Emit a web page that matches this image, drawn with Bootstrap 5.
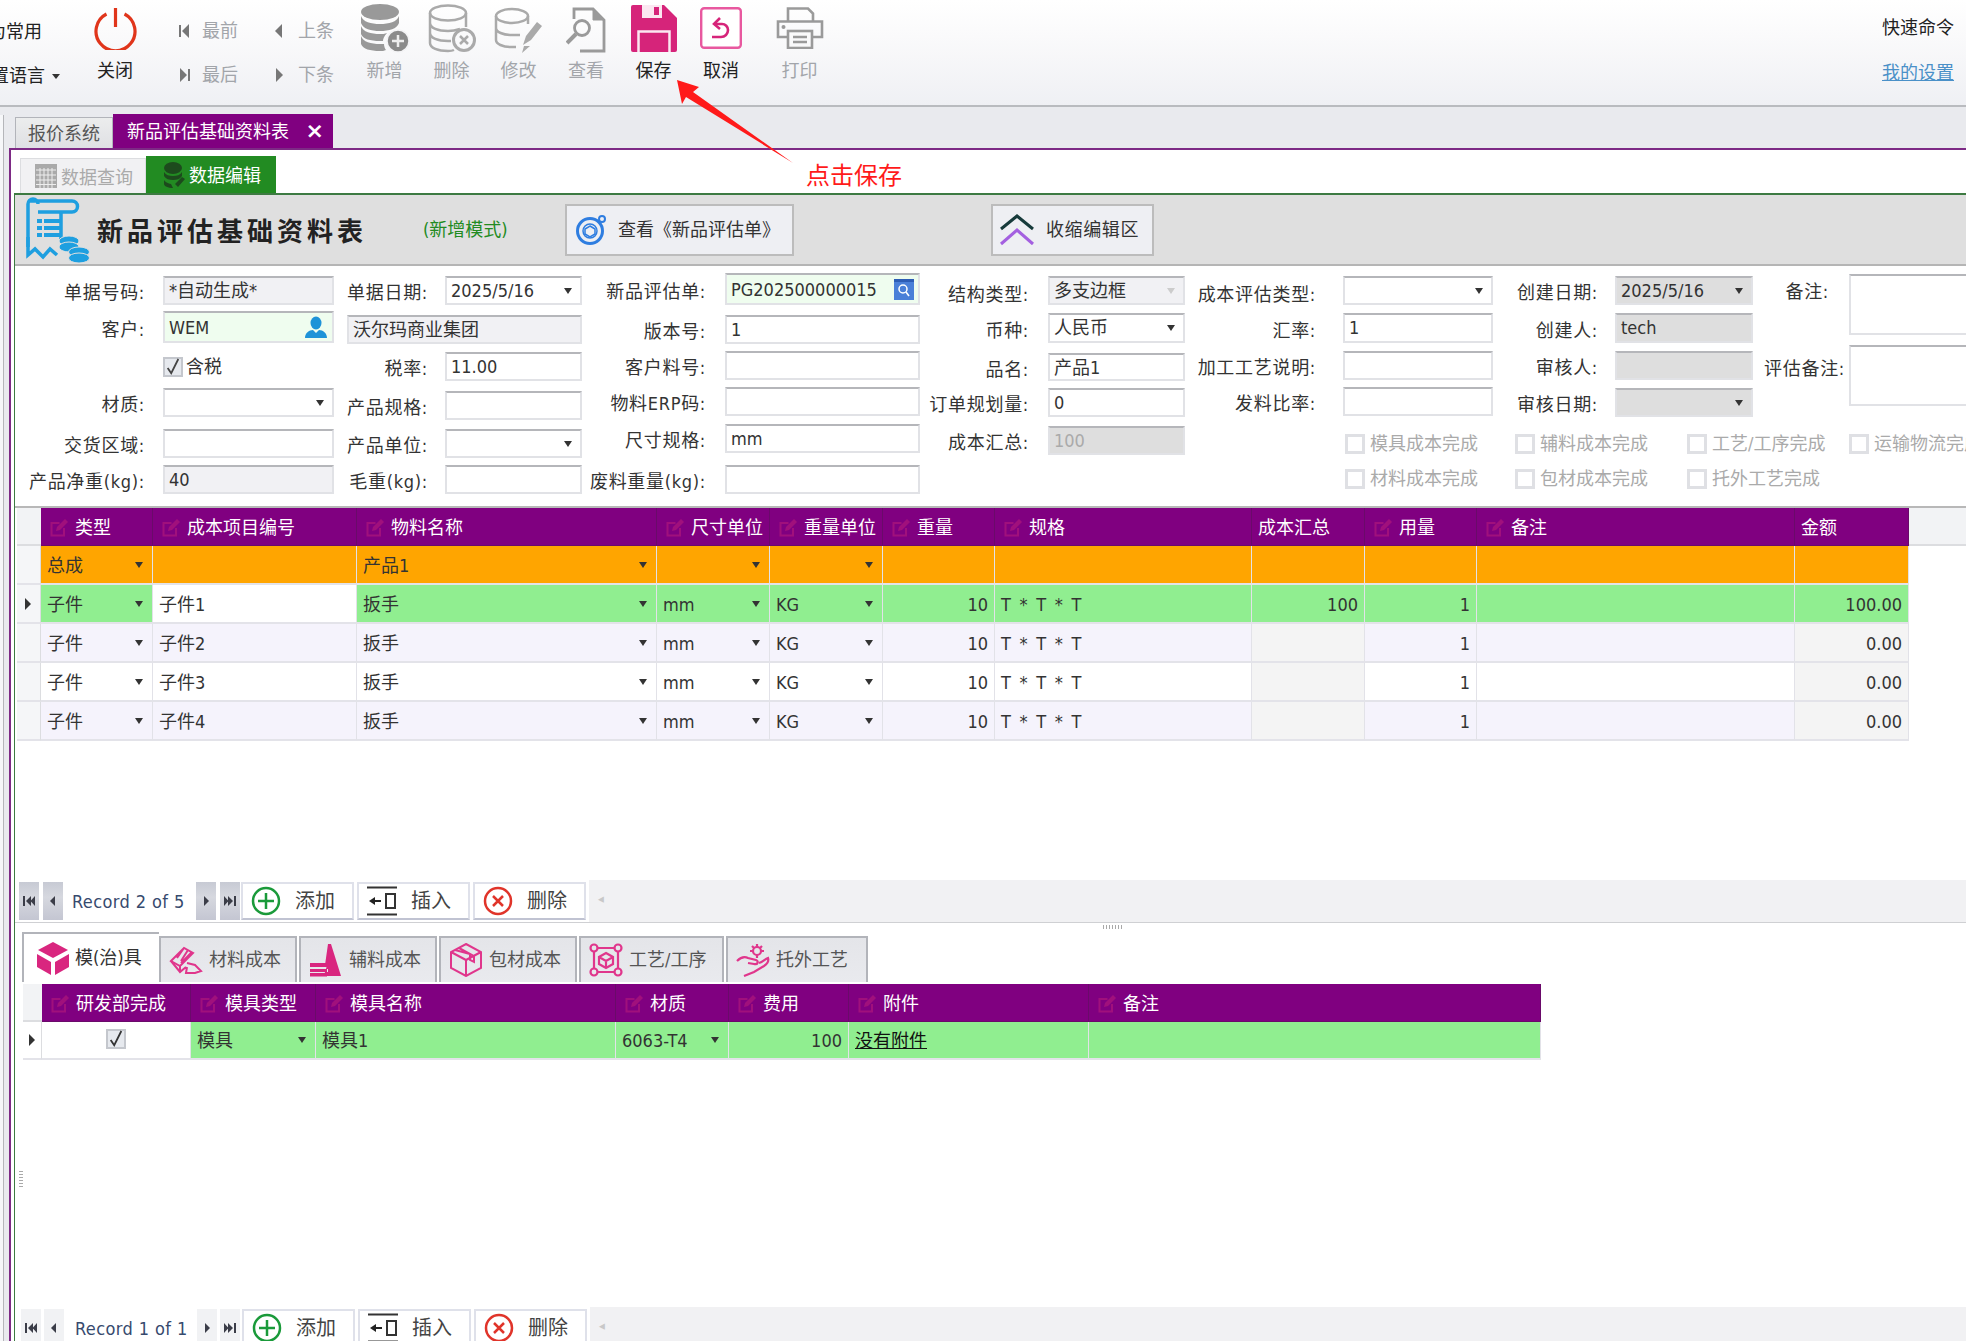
<!DOCTYPE html>
<html lang="zh-CN">
<head>
<meta charset="utf-8">
<title>新品评估基础资料表</title>
<link href="https://cdn.jsdelivr.net/npm/bootstrap@5.3.0/dist/css/bootstrap.min.css" rel="stylesheet">
<style>
html,body{width:1966px;height:1341px;overflow:hidden;margin:0}
body{font-family:"DejaVu Sans Condensed","DejaVu Sans","Noto Sans CJK SC",sans-serif;font-size:18px;line-height:1.2;color:#333;background:#fff;position:relative}
.sprites{display:none}
/* toolbar */
.tbar{height:107px;background:linear-gradient(#fff 0,#fafafb 35%,#eff0f4 100%);border-bottom:2px solid #b9bbbf;overflow:hidden}
.cutbox{width:60px;overflow:hidden;flex:none;padding-top:10px}
.cutln{height:44px;white-space:nowrap;justify-content:flex-end;color:#222}
.cutln.one{padding-right:18px}
.crt{width:0;height:0;border-left:4px solid transparent;border-right:4px solid transparent;border-top:5px solid #333;margin-left:7px}
.bigbtn{flex:none;display:flex;flex-direction:column;align-items:center;height:107px;position:relative;color:#a2a5aa}
.bigbtn.on{color:#222}
.icbox{height:60px;display:flex;align-items:flex-start;justify-content:center}
.w66{width:66px}.w67{width:67px}.w68{width:68px}.w89{width:89px}
.ml22{margin-left:22px}.ml11{margin-left:11px}
.pt7{padding-top:7px}.pt4{padding-top:4px}.pt5{padding-top:5px}
.navgrp{width:161px;margin-left:31px;padding-top:20px;flex:none;color:#a2a5aa}
.navln{height:44px;display:flex;align-items:flex-start}
.navitm{width:95px;display:flex;align-items:center;color:#a2a5aa}
.navitm svg{width:11px;height:14px;margin-right:12px;flex:none}
.navitm.up{width:66px}
.navitm.up svg{margin-right:13px}
.qcmd{margin-left:auto;padding:17px 12px 0 0;text-align:right;color:#222}
.qlink{display:block;margin-top:23px;color:#4a90c8;text-decoration:underline}
/* stage */
.stage{height:1234px;background:#e9eaee}
.lstrip{width:9px;flex:none}
.lpane{width:4px;height:100%;margin-top:8px;background:#f6f7f9;border-right:1px solid #b5b6ba}
.rpane{flex:1;min-width:0}
.ttabs{height:41px;padding:7px 0 0 6px;align-items:flex-end}
.ttab{height:31px;width:98px;background:linear-gradient(#eceded,#dfe0e4);border:1px solid #b2b4ba;border-bottom:0;color:#555;text-align:center;line-height:32px}
.ttab.act{height:34px;width:220px;background:#800080;border:0;color:#fff;text-align:left;padding-left:14px;line-height:35px;justify-content:space-between;padding-right:9px;font-size:18px}
.closex{font-weight:700;font-size:22px;line-height:33px;font-family:"DejaVu Sans",sans-serif}
.pframe{border-top:2px solid #7d2a85;border-left:2px solid #7d2a85;background:#fff;height:1193px;padding-left:3px}
.stabs{height:43px;padding-left:6px;align-items:flex-end}
.stab{height:35px;width:126px;background:#f1f1f3;border:1px solid #dcdde0;border-bottom:0;color:#aaa;gap:4px;padding-left:14px}
.stab span{padding-top:3px}
.stab.act{height:37px;width:130px;background:#228b22;border:0;color:#fff;padding-left:17px}
.gframe{border-top:2px solid #3d7a42;border-left:1px solid #3d7a42;height:1148px}
.headb{height:71px;background:#dfdfdf;border-bottom:2px solid #b5b5b5;padding-left:8px;overflow:hidden}
.ttl{font-weight:700;font-size:26px;letter-spacing:4px;color:#222;margin-left:7px;width:326px;font-family:"Noto Sans CJK SC",sans-serif}
.mode{color:#228b22;width:142px}
.hbtn{height:52px;background:#eeeff3;border:2px solid #bcbcbc;border-radius:0;color:#333;padding:0 8px;font-size:18px;gap:11px;display:flex;align-items:center;white-space:nowrap;--bs-btn-hover-bg:#eeeff3}
.w229{width:229px}.w163{width:163px;margin-left:197px;padding:0 6px;letter-spacing:.6px}
/* form */
.frm{height:240px;overflow:hidden}
.fcol{flex:none}
.fcol1{width:319px}.fcol2{width:248px}.fcol3{width:338px}.fcol4{width:265px}.fcol5{width:308px}.fcol6{width:260px}.fcol7{width:230px}
.fld{height:29px;display:flex;align-items:center}
.h30{height:30px}.h32{height:32px}.h28{height:28px}.h61{height:61px;align-items:flex-start}
.gp6{margin-top:6px}.gp7{margin-top:7px}.gp8{margin-top:8px}.gp9{margin-top:9px}.gp10{margin-top:10px}.gp12{margin-top:12px}
.lb{flex:none;text-align:right;white-space:nowrap;padding-top:5px;color:#333;letter-spacing:.7px}
.lb1{width:148px;padding-right:18px}.lb2{width:111px;padding-right:17px}.lb3{width:143px;padding-right:19px}.lb4{width:128px;padding-right:19px}.lb5{width:158px;padding-right:27px}.lb6{width:122px;padding-right:17px}.lb7{width:96px;padding-right:4px}
.lb.lbd{padding-top:9px}
.lb.lbn{padding:7px 20px 0 0}
.lb.lbm{padding-top:13px}
.fld .form-control,.fld .form-select{height:100%;border-radius:0;border:2px solid #e1e2e6;border-top-color:#b5b6ba;padding:0 4px;font-size:18px;line-height:25px;color:#333;min-height:0;box-shadow:none;white-space:nowrap;overflow:hidden;font-family:inherit}
.fld .form-select{background-image:url("data:image/svg+xml,%3Csvg xmlns='http://www.w3.org/2000/svg' viewBox='0 0 8 6'%3E%3Cpath d='M0 0h8L4 6z' fill='%23333'/%3E%3C/svg%3E");background-size:8px 6px;background-position:right 8px center}
.w171{width:171px;flex:none}.w137{width:137px;flex:none}.w195{width:195px;flex:none}.w150{width:150px;flex:none}.w138{width:138px;flex:none}.w140{width:150px;flex:none}
.w235{width:235px;flex:none;margin-left:13px}
.bgro{background-color:#f1f1f4 !important}.bggn{background-color:#effdef !important}.bgd{background-color:#dedede !important}.dim{color:#aaa !important}
.faint.form-select{background-image:url("data:image/svg+xml,%3Csvg xmlns='http://www.w3.org/2000/svg' viewBox='0 0 8 6'%3E%3Cpath d='M0 0h8L4 6z' fill='%23ccc'/%3E%3C/svg%3E") !important}
.tight{display:flex !important;justify-content:space-between;align-items:center}
.ck{width:20px;height:20px;flex:none;background:#e6e9ee;border:2px solid #c4c7cd;border-radius:0;display:inline-flex;align-items:center;justify-content:center}
.ck.off{background:#fff;border:3px solid #dfe0e4}
.chk{height:29px;padding-left:0;gap:3px;color:#333}
.chkpad{margin-left:148px}
.cgrp{flex:none;width:798px}
.cgrid{display:grid;grid-template-columns:170px 172px 162px auto;row-gap:15px;padding:17px 0 0 160px}
.cit{display:flex;align-items:center;gap:5px;color:#aaa;white-space:nowrap;height:20px}
/* grids */
.rule{height:2px;background:#b8b8b8}
.g1wrap{height:372px;padding-left:2px;overflow:hidden}
.g2wrap{height:323px;margin-top:2px;padding-left:8px;overflow:hidden}
.dg{table-layout:fixed;margin:0;border-collapse:separate;border-spacing:0;font-size:18px;line-height:1.2}
.dg.t1{width:1950px}.dg.t2{width:1518px}
.dg>*>tr>*{padding:2px 6px 0;height:39px;border:0;border-right:1px solid #e2e2e8;border-bottom:2px solid #e3e3e9;white-space:nowrap;overflow:hidden;vertical-align:middle;color:#333;font-weight:400}
.dg>thead>tr>*{height:38px;--bs-table-bg:#800080;color:#fff;border-right:1px solid #6a0a6a;border-bottom:1px solid #6a0a6a}
.dg.t2>tbody>tr>*{height:38px}
.dg>thead>tr>th.ind,.dg>thead>tr>th.fil{--bs-table-bg:#f2f3f5;border-right:0;border-bottom:2px solid #dcdde0}
.dg>tbody>tr>td.ind{--bs-table-bg:#f5f6f8;padding:0 0 0 8px;border-right:1px solid #dcdde0}
.dg.t2>tbody>tr>td.ind{padding-left:6px}
.dg>tbody>tr>td.indw{--bs-table-bg:#fff}
.dg>tbody>tr>td.fil{--bs-table-bg:#fff;border:0}
.thi{display:flex;align-items:center;gap:6px}
.thi svg{width:20px;height:20px;flex:none;margin-left:2px;color:#a0107c}
.rorg>td{--bs-table-bg:#ffa500}
.rgrn>td{--bs-table-bg:#90ee90}
.ralt>td{--bs-table-bg:#f5f3fc}
.rwht>td{--bs-table-bg:#fff}
.dg>tbody>tr>td.cw{--bs-table-bg:#fff}
.dg>tbody>tr>td.cg{--bs-table-bg:#f4f4f4}
.tts{word-spacing:3.5px}
.dd{background-image:url("data:image/svg+xml,%3Csvg xmlns='http://www.w3.org/2000/svg' viewBox='0 0 8 6'%3E%3Cpath d='M0 0h8L4 6z' fill='%23333'/%3E%3C/svg%3E");background-repeat:no-repeat;background-size:8px 6px;background-position:right 9px center}
.ar{width:0;height:0;border-top:6px solid transparent;border-bottom:6px solid transparent;border-left:6px solid #333;display:block}
.c-a{width:24px}.c-b{width:112px}.c-c{width:204px}.c-d{width:300px}.c-e{width:113px}.c-f{width:112px}.c-g{width:257px}.c-h{width:318px}.c-i{width:114px}.c-j{width:58px}
.d-a{width:19px}.d-b{width:149px}.d-c{width:125px}.d-d{width:113px}.d-e{width:120px}.d-f{width:240px}.d-g{width:452px}
/* record nav */
.rnav{height:42px;padding-top:2px;margin-left:4px;overflow:hidden}
.rnav.pad2{margin-left:6px;height:34px}
.mv{width:20px;height:38px;flex:none;background:linear-gradient(#c7cad4,#d6d8df 40%,#c4c6d2);display:flex;align-items:center;justify-content:center;margin-right:4px}
.mv.lastmv{margin-right:1px}
.mv.pale{background:#f1f2f4;margin-right:3px}
.mv.pale.lastmv{margin-right:2px}
.mv svg{width:12px;height:10px}
.rec{width:129px;flex:none;padding-left:5px;color:#364a6e;white-space:nowrap;line-height:40px;letter-spacing:.4px}
.pad2 .rec{width:130px;padding-left:8px}
.acbtn{flex:none;width:113px;height:38px;background:#fff;border:2px solid #dfe1ea;border-bottom-color:#c0c3d2;border-radius:0;margin-right:3px;padding:0 0 0 8px;display:flex;align-items:center;gap:14px;color:#444;font-size:20px;--bs-btn-hover-bg:#fff}
.acbtn svg{width:30px;height:30px;flex:none}
.trk{flex:1;height:42px;margin-top:-2px;background:#f1f1f3;color:#c8c8c8;padding:11px 0 0 9px;font-size:13px}
.split{height:10px;border-top:1px solid #cfd0d3;position:relative}
.grip{display:block;width:20px;height:4px;margin:2px 0 0 1088px;background:repeating-linear-gradient(90deg,#a9a9a9 0 1px,#fff 1px 3px)}
.mtabs{height:50px;padding-left:7px;align-items:flex-end;border-bottom:0}
.mtab{height:46px;width:138px;background:linear-gradient(#e4e5e9,#e9eaee);border:2px solid #b2b4ba;border-right-color:#b2b4ba;border-bottom:0;margin-right:2px;color:#555;gap:6px;padding-left:8px;white-space:nowrap}
.mtab svg{width:34px;height:34px;flex:none}
.mtab.act{height:50px;width:137px;background:#fff;border-right:0;color:#333;margin-right:0;padding-left:12px;gap:5px}
.mtab.wd{width:145px}
.mtab.wf{width:142px}
.rgrip{position:absolute;left:19px;top:1171px;width:4px;height:16px;background:repeating-linear-gradient(#a9a9a9 0 1px,#fff 1px 3px)}
.rarrow{position:absolute;left:0;top:0;width:1966px;height:200px;pointer-events:none}
.note{position:absolute;left:806px;top:158px;color:#ff1a1a;font-size:24px;font-family:"Noto Sans CJK SC",sans-serif;line-height:1.3}
.ulink{color:#111;text-decoration:underline}
</style>
</head>
<body>
<svg class="sprites" xmlns="http://www.w3.org/2000/svg">
  <symbol id="ed" viewBox="0 0 20 20"><path d="M15 10v7.500H2.500V5h8" fill="none" stroke="currentColor" stroke-width="2"/><path d="M7 13l1-4 8-8 3 3-8 8z" fill="currentColor"/></symbol>
  <symbol id="first" viewBox="0 0 12 10"><path d="M0 0h2v10H0zM8 0v10L3 5zM12 0v10L7.500 5z" fill="#3b3d48"/></symbol>
  <symbol id="prev" viewBox="0 0 12 10"><path d="M8 0v10L3 5z" fill="#3b3d48"/></symbol>
  <symbol id="next" viewBox="0 0 12 10"><path d="M4 0v10l5-5z" fill="#3b3d48"/></symbol>
  <symbol id="last" viewBox="0 0 12 10"><path d="M12 0h-2v10h2zM4 0v10l5-5zM0 0v10l4.500-5z" fill="#3b3d48"/></symbol>
  <symbol id="plus" viewBox="0 0 30 30"><circle cx="15" cy="15" r="13" fill="none" stroke="#1a9a3a" stroke-width="2.500"/><path d="M15 7v16M7 15h16" stroke="#1a9a3a" stroke-width="2.500"/></symbol>
  <symbol id="ins" viewBox="0 0 30 30"><path d="M0 1.500h30M0 28.500h30" stroke="#333" stroke-width="2"/><path d="M2 15l6-4v3h6v2H8v3z" fill="#222"/><rect x="19" y="8" width="9" height="14" fill="none" stroke="#333" stroke-width="2"/></symbol>
  <symbol id="del" viewBox="0 0 30 30"><circle cx="15" cy="15" r="13" fill="none" stroke="#e0342a" stroke-width="2.500"/><path d="M10 10l10 10M20 10L10 20" stroke="#e0342a" stroke-width="2.500"/></symbol>
</svg>

<header class="tbar d-flex">
  <div class="cutbox">
    <div class="cutln one d-flex align-items-center">设为常用</div>
    <div class="cutln d-flex align-items-center">设置语言<span class="crt"></span></div>
  </div>
  <div class="bigbtn on w66 ml22">
    <div class="icbox pt7"><svg width="43" height="43" viewBox="0 0 43 43"><path d="M12.500 7a19.500 19.500 0 1 0 18 0" fill="none" stroke="#e0351b" stroke-width="3.200"/><path d="M21.500 1v19" stroke="#e0351b" stroke-width="3.200"/></svg></div>
    <div>关闭</div>
  </div>
  <div class="navgrp">
    <div class="navln">
      <div class="navitm"><svg viewBox="0 0 11 14"><path d="M0 1h2v12H0zM10 0v14L3 7z" fill="#777"/></svg>最前</div>
      <div class="navitm up"><svg viewBox="0 0 11 14"><path d="M8 0v14L1 7z" fill="#777"/></svg>上条</div>
    </div>
    <div class="navln">
      <div class="navitm"><svg viewBox="0 0 11 14"><path d="M9 1h2v12H9zM1 0v14l7-7z" fill="#777"/></svg>最后</div>
      <div class="navitm up"><svg viewBox="0 0 11 14"><path d="M2 0v14l7-7z" fill="#777"/></svg>下条</div>
    </div>
  </div>
  <div class="bigbtn w67 ml11">
    <div class="icbox pt4"><svg width="50" height="49" viewBox="0 0 50 49"><g fill="#999"><ellipse cx="20" cy="8" rx="19" ry="8"/><path d="M1 12c2 6 10 8 19 8s17-2 19-8v7c-2 6-10 8-19 8S3 25 1 19z"/><path d="M1 22c2 6 10 8 19 8 2 0 5 0 7-1-3 3-4 6-4 8h-3C10 37 3 35 1 30z"/><path d="M1 32c2 6 10 8 19 8h4c0 2 1 5 2 6-2 1-4 1-6 1C10 47 3 45 1 40z"/></g><circle cx="38" cy="37" r="11" fill="#8b8b8b" stroke="#f4f4f6" stroke-width="1.500"/><path d="M38 31v12M32 37h12" stroke="#eee" stroke-width="2.500"/></svg></div>
    <div>新增</div>
  </div>
  <div class="bigbtn w67">
    <div class="icbox pt4"><svg width="48" height="49" viewBox="0 0 48 49"><g fill="none" stroke="#aaa" stroke-width="2.500"><ellipse cx="20" cy="9" rx="18" ry="7.500"/><path d="M2 9v30c0 5 8 8 18 8 2 0 4 0 6-1M38 9v14M2 19c0 5 8 8 18 8 4 0 9-1 12-2M2 29c0 5 8 8 18 8h3"/><circle cx="36" cy="36" r="10.500" stroke-width="3"/><path d="M32 32l8 8M40 32l-8 8"/></g></svg></div>
    <div>删除</div>
  </div>
  <div class="bigbtn w67">
    <div class="icbox pt7"><svg width="50" height="46" viewBox="0 0 50 46"><g fill="none" stroke="#aaa" stroke-width="2.500"><ellipse cx="18" cy="9" rx="16" ry="7"/><path d="M2 9v24c0 4 7 7 14 7h6M34 9v8M2 21c0 4 7 7 16 7h8"/></g><path d="M29 38l3-9 11-14 5 4-11 14-8 5zM28 46l2-7 6 0z" fill="#aaa"/></svg></div>
    <div>修改</div>
  </div>
  <div class="bigbtn w68">
    <div class="icbox pt7"><svg width="40" height="46" viewBox="0 0 40 46"><path d="M8 12V2h19l11 11v31H14" fill="none" stroke="#9a9a9a" stroke-width="2.800"/><path d="M27 2v11h11" fill="#9a9a9a" stroke="#9a9a9a" stroke-width="1"/><circle cx="16" cy="21" r="7.500" fill="none" stroke="#9a9a9a" stroke-width="2.800"/><path d="M10 27L1 36" stroke="#9a9a9a" stroke-width="4"/></svg></div>
    <div>查看</div>
  </div>
  <div class="bigbtn on w67">
    <div class="icbox pt5"><svg width="46" height="47" viewBox="0 0 46 47"><path d="M2 0h31l13 13v32a2 2 0 0 1-2 2H2a2 2 0 0 1-2-2V2a2 2 0 0 1 2-2z" fill="#d6247a"/><path d="M11 0h20v13H11z" fill="#fbe7f1"/><path d="M23 2h5v8h-5z" fill="#d6247a"/><path d="M7.500 47V26.500h31V47" fill="#d6247a" stroke="#fbe7f1" stroke-width="2.500"/></svg></div>
    <div>保存</div>
  </div>
  <div class="bigbtn on w68">
    <div class="icbox pt7"><svg width="42" height="42" viewBox="0 0 42 42"><rect x="1.200" y="1.200" width="39.600" height="39.600" rx="3" fill="#fff" stroke="#e8589f" stroke-width="2.400"/><path d="M20 11l-6 6 6 5" fill="none" stroke="#d6247a" stroke-width="2.600"/><path d="M15 17h7a6 6 0 0 1 6 6c0 4-3 7-7 7h-9" fill="none" stroke="#d6247a" stroke-width="2.600"/></svg></div>
    <div>取消</div>
  </div>
  <div class="bigbtn w89">
    <div class="icbox pt7"><svg width="48" height="42" viewBox="0 0 48 42"><g fill="none" stroke="#9a9a9a" stroke-width="2.600"><path d="M12 14V1.500h20l5 5V14M12 30H2V14.500h44V30H36"/><rect x="12" y="24" width="24" height="17"/><path d="M17 30h14M17 35h14"/></g><circle cx="7.500" cy="20" r="2" fill="#9a9a9a"/></svg></div>
    <div>打印</div>
  </div>
  <div class="qcmd">快速命令<a class="qlink" href="#">我的设置</a></div>
</header>

<div class="stage d-flex">
  <div class="lstrip"><div class="lpane"></div></div>
  <div class="rpane">
    <div class="ttabs d-flex">
      <div class="ttab">报价系统</div>
      <div class="ttab act d-flex"><span>新品评估基础资料表</span><span class="closex">×</span></div>
    </div>
    <div class="pframe">
      <div class="stabs d-flex">
        <div class="stab d-flex align-items-center"><svg width="22" height="24" viewBox="0 0 22 24"><path d="M0 0h22v24H0z" fill="#aaa"/><path d="M1 6h20M1 11h20M1 16h20M1 20.500h20M5 4v20M9 4v20M13 4v20M17 4v20" stroke="#eee" stroke-width="1"/></svg><span>数据查询</span></div>
        <div class="stab act d-flex align-items-center"><svg width="22" height="26" viewBox="0 0 22 26"><g fill="#1d4a1d"><ellipse cx="10" cy="6" rx="9" ry="6"/><path d="M1 10c2 3 5 4 9 4s7-1 9-4v4c-2 3-5 4-9 4s-7-1-9-4z"/><path d="M1 18c2 3 4 3 7 4l2 4c-5 0-9-2-9-4z"/><path d="M12 22l7-7 3 2-7 8z"/></g></svg><span>数据编辑</span></div>
      </div>
      <div class="gframe">
        <div class="headb d-flex align-items-center">
          <svg width="67" height="66" viewBox="0 0 67 66"><g fill="none" stroke="#1e9fe0" stroke-width="3.500"><path d="M5 50V7a5 5 0 0 1 10 0M5 4h44a5 5 0 0 1 0 11H38M15 15h23V42"/><path d="M5 40v18l7-6 8 8 7-8 7 6"/></g><path d="M14 22h5v4h-5zM21 22h16v4H21zM14 29h5v4h-5zM21 29h16v4H21zM14 36h5v4h-5zM21 36h16v4H21z" fill="#1e9fe0"/><g fill="#1e9fe0" stroke="#dfdfdf" stroke-width="1"><ellipse cx="46" cy="44" rx="10" ry="5"/><ellipse cx="46" cy="50" rx="10" ry="5"/><ellipse cx="56" cy="55" rx="10.500" ry="5"/><ellipse cx="56" cy="61" rx="10.500" ry="5"/></g></svg>
          <div class="ttl">新品评估基础资料表</div>
          <div class="mode">(新增模式)</div>
          <button type="button" class="btn hbtn w229"><svg width="32" height="32" viewBox="0 0 32 32"><circle cx="15" cy="17" r="12.500" fill="none" stroke="#2e7de0" stroke-width="3"/><circle cx="15" cy="17" r="7" fill="none" stroke="#2e7de0" stroke-width="1.500"/><path d="M15 12l5 3v5l-5 3-5-3v-5z" fill="none" stroke="#2e7de0" stroke-width="1.500"/><circle cx="27" cy="5" r="3" fill="none" stroke="#2e7de0" stroke-width="2"/></svg>查看《新品评估单》</button>
          <button type="button" class="btn hbtn w163"><svg width="36" height="32" viewBox="0 0 36 32"><path d="M2 15L18 2l16 13" fill="none" stroke="#173b3b" stroke-width="3"/><path d="M2 30l16-14 16 14" fill="none" stroke="#a460e0" stroke-width="3"/></svg>收缩编辑区</button>
        </div>

        <div class="frm d-flex">
          <div class="fcol fcol1">
            <div class="fld gp10"><span class="lb lb1">单据号码:</span><div class="form-control w171 bgro">*自动生成*</div></div>
            <div class="fld h32 gp6"><span class="lb lb1">客户:</span><div class="form-control w171 bggn tight"><span>WEM</span><svg width="24" height="22" viewBox="0 0 24 22"><ellipse cx="12" cy="7" rx="5.500" ry="6.500" fill="#1e93d8"/><path d="M1 22c0-5 4-8 8-8l3 3 3-3c4 0 8 3 8 8z" fill="#1e93d8"/></svg></div></div>
            <div class="fld gp9"><div class="chkpad chk d-flex align-items-center"><span class="ck"><svg width="18" height="20" viewBox="0 0 18 20"><path d="M3 11l4 6 8-16" fill="none" stroke="#444" stroke-width="2"/></svg></span>含税</div></div>
            <div class="fld gp7"><span class="lb lb1">材质:</span><div class="form-select w171"></div></div>
            <div class="fld gp12"><span class="lb lb1">交货区域:</span><div class="form-control w171"></div></div>
            <div class="fld gp7"><span class="lb lb1">产品净重(kg):</span><div class="form-control w171 bgro">40</div></div>
          </div>
          <div class="fcol fcol2">
            <div class="fld gp10"><span class="lb lb2">单据日期:</span><div class="form-select w137">2025/5/16</div></div>
            <div class="fld gp10"><div class="form-control w235 bgro">沃尔玛商业集团</div></div>
            <div class="fld gp8"><span class="lb lb2">税率:</span><div class="form-control w137">11.00</div></div>
            <div class="fld gp10"><span class="lb lb2">产品规格:</span><div class="form-control w137"></div></div>
            <div class="fld gp9"><span class="lb lb2">产品单位:</span><div class="form-select w137"></div></div>
            <div class="fld gp7"><span class="lb lb2">毛重(kg):</span><div class="form-control w137"></div></div>
          </div>
          <div class="fcol fcol3">
            <div class="fld h32 gp7"><span class="lb lb3">新品评估单:</span><div class="form-control w195 bggn tight"><span>PG202500000015</span><svg width="20" height="21" viewBox="0 0 20 21"><rect width="20" height="21" fill="#4a80d8"/><rect y="0" width="20" height="3" fill="#2d5db5"/><circle cx="9" cy="10" r="4" fill="none" stroke="#fff" stroke-width="1.500"/><path d="M12 13l3 4" stroke="#fff" stroke-width="1.500"/></svg></div></div>
            <div class="fld gp10"><span class="lb lb3">版本号:</span><div class="form-control w195">1</div></div>
            <div class="fld gp7"><span class="lb lb3">客户料号:</span><div class="form-control w195"></div></div>
            <div class="fld gp7"><span class="lb lb3">物料ERP码:</span><div class="form-control w195"></div></div>
            <div class="fld gp8"><span class="lb lb3">尺寸规格:</span><div class="form-control w195">mm</div></div>
            <div class="fld gp12"><span class="lb lb3">废料重量(kg):</span><div class="form-control w195"></div></div>
          </div>
          <div class="fcol fcol4">
            <div class="fld gp10"><span class="lb lb4 lbd">结构类型:</span><div class="form-select faint w137 bgro">多支边框</div></div>
            <div class="fld h30 gp8"><span class="lb lb4">币种:</span><div class="form-select w137">人民币</div></div>
            <div class="fld h28 gp10"><span class="lb lb4">品名:</span><div class="form-control w137">产品1</div></div>
            <div class="fld gp7"><span class="lb lb4">订单规划量:</span><div class="form-control w137">0</div></div>
            <div class="fld gp9"><span class="lb lb4">成本汇总:</span><div class="form-control w137 bgd dim">100</div></div>
          </div>
          <div class="cgrp">
            <div class="d-flex">
              <div class="fcol fcol5">
                <div class="fld gp10"><span class="lb lb5 lbd">成本评估类型:</span><div class="form-select w150"></div></div>
                <div class="fld h30 gp8"><span class="lb lb5">汇率:</span><div class="form-control w150">1</div></div>
                <div class="fld gp8"><span class="lb lb5">加工工艺说明:</span><div class="form-control w150"></div></div>
                <div class="fld gp7"><span class="lb lb5">发料比率:</span><div class="form-control w150"></div></div>
              </div>
              <div class="fcol fcol6">
                <div class="fld gp10"><span class="lb lb6">创建日期:</span><div class="form-select w138 bgd">2025/5/16</div></div>
                <div class="fld h30 gp8"><span class="lb lb6">创建人:</span><div class="form-control w138 bgd">tech</div></div>
                <div class="fld gp8"><span class="lb lb6">审核人:</span><div class="form-control w138 bgd"></div></div>
                <div class="fld gp8"><span class="lb lb6">审核日期:</span><div class="form-select w138 bgd"></div></div>
              </div>
              <div class="fcol fcol7">
                <div class="fld h61 gp8"><span class="lb lb7 lbn">备注:</span><div class="form-control w140"></div></div>
                <div class="fld h61 gp10"><span class="lb lb7 lbm">评估备注:</span><div class="form-control w140"></div></div>
              </div>
            </div>
            <div class="cgrid">
              <div class="cit"><span class="ck off"></span>模具成本完成</div>
              <div class="cit"><span class="ck off"></span>辅料成本完成</div>
              <div class="cit"><span class="ck off"></span>工艺/工序完成</div>
              <div class="cit"><span class="ck off"></span>运输物流完成</div>
              <div class="cit"><span class="ck off"></span>材料成本完成</div>
              <div class="cit"><span class="ck off"></span>包材成本完成</div>
              <div class="cit"><span class="ck off"></span>托外工艺完成</div>
            </div>
          </div>
        </div>
        <div class="rule"></div>

        <div class="g1wrap">
          <table class="table dg t1">
            <colgroup><col class="c-a"><col class="c-b"><col class="c-c"><col class="c-d"><col class="c-e"><col class="c-e"><col class="c-f"><col class="c-g"><col class="c-e"><col class="c-f"><col class="c-h"><col class="c-i"><col class="c-j"></colgroup>
            <thead><tr>
              <th class="ind"></th>
              <th><div class="thi"><svg><use href="#ed"/></svg>类型</div></th>
              <th><div class="thi"><svg><use href="#ed"/></svg>成本项目编号</div></th>
              <th><div class="thi"><svg><use href="#ed"/></svg>物料名称</div></th>
              <th><div class="thi"><svg><use href="#ed"/></svg>尺寸单位</div></th>
              <th><div class="thi"><svg><use href="#ed"/></svg>重量单位</div></th>
              <th><div class="thi"><svg><use href="#ed"/></svg>重量</div></th>
              <th><div class="thi"><svg><use href="#ed"/></svg>规格</div></th>
              <th>成本汇总</th>
              <th><div class="thi"><svg><use href="#ed"/></svg>用量</div></th>
              <th><div class="thi"><svg><use href="#ed"/></svg>备注</div></th>
              <th>金额</th>
              <th class="fil"></th>
            </tr></thead>
            <tbody>
              <tr class="rorg"><td class="ind"></td><td class="dd">总成</td><td></td><td class="dd">产品1</td><td class="dd"></td><td class="dd"></td><td></td><td></td><td></td><td></td><td></td><td></td><td class="fil"></td></tr>
              <tr class="rgrn"><td class="ind"><span class="ar"></span></td><td class="dd">子件</td><td class="cw">子件1</td><td class="dd">扳手</td><td class="dd">mm</td><td class="dd">KG</td><td class="text-end">10</td><td class="tts">T * T * T</td><td class="text-end">100</td><td class="text-end">1</td><td></td><td class="text-end">100.00</td><td class="fil"></td></tr>
              <tr class="ralt"><td class="ind"></td><td class="dd">子件</td><td>子件2</td><td class="dd">扳手</td><td class="dd">mm</td><td class="dd">KG</td><td class="text-end">10</td><td class="tts">T * T * T</td><td class="cg"></td><td class="text-end">1</td><td></td><td class="text-end cg">0.00</td><td class="fil"></td></tr>
              <tr class="rwht"><td class="ind"></td><td class="dd">子件</td><td>子件3</td><td class="dd">扳手</td><td class="dd">mm</td><td class="dd">KG</td><td class="text-end">10</td><td class="tts">T * T * T</td><td class="cg"></td><td class="text-end">1</td><td></td><td class="text-end cg">0.00</td><td class="fil"></td></tr>
              <tr class="ralt"><td class="ind"></td><td class="dd">子件</td><td>子件4</td><td class="dd">扳手</td><td class="dd">mm</td><td class="dd">KG</td><td class="text-end">10</td><td class="tts">T * T * T</td><td class="cg"></td><td class="text-end">1</td><td></td><td class="text-end cg">0.00</td><td class="fil"></td></tr>
            </tbody>
          </table>
        </div>

        <div class="rnav d-flex">
          <div class="mv"><svg><use href="#first"/></svg></div><div class="mv"><svg><use href="#prev"/></svg></div>
          <div class="rec">Record 2 of 5</div>
          <div class="mv"><svg><use href="#next"/></svg></div><div class="mv lastmv"><svg><use href="#last"/></svg></div>
          <button type="button" class="btn acbtn"><svg><use href="#plus"/></svg>添加</button>
          <button type="button" class="btn acbtn"><svg><use href="#ins"/></svg>插入</button>
          <button type="button" class="btn acbtn"><svg><use href="#del"/></svg>删除</button>
          <div class="trk">◂</div>
        </div>
        <div class="split"><span class="grip"></span></div>

        <div class="mtabs d-flex">
          <div class="mtab act d-flex align-items-center"><svg viewBox="0 0 34 34"><path d="M17 1l15 8-15 8L2 9z" fill="#d9267f"/><path d="M1 13l14 8v13L1 26z" fill="#d9267f"/><path d="M33 13l-14 8v13l14-8z" fill="#d9267f"/></svg>模(治)具</div>
          <div class="mtab d-flex align-items-center"><svg viewBox="0 0 34 34"><g fill="none" stroke="#e0368c" stroke-width="2"><path d="M2 18l13-13 9 5-13 13zM15 5l-7 10M19 7l-7 11M23 9L12 20"/><path d="M2 18l9 11 6-5M11 23v6M18 20l8 2 6 6-6 2h-9l1-6"/></g></svg>材料成本</div>
          <div class="mtab d-flex align-items-center"><svg viewBox="0 0 34 34"><path d="M19 1h3l10 32H15l1-4h3v-3h-2l1-4h-2z" fill="#d9267f"/><path d="M1 20h17v4H1zM1 26h17v3H1zM1 30h17v3.500H1z" fill="#d9267f"/></svg>辅料成本</div>
          <div class="mtab d-flex align-items-center"><svg viewBox="0 0 34 34"><g fill="none" stroke="#e0368c" stroke-width="2"><path d="M17 1l15 8v16l-15 8-15-8V9z"/><path d="M2 9l15 8 15-8M17 17v16M10 5l15 8v6l-4-2v-6L6 7"/></g></svg>包材成本</div>
          <div class="mtab wd d-flex align-items-center"><svg viewBox="0 0 34 34"><g fill="none" stroke="#e0368c" stroke-width="2.200"><circle cx="5" cy="5" r="3.500"/><circle cx="29" cy="5" r="3.500"/><circle cx="5" cy="29" r="3.500"/><circle cx="29" cy="29" r="3.500"/><path d="M5 9v16M29 9v16M9 5h16M9 29h16"/><path d="M17 10l7 4v7l-7 4-7-4v-7zM10 14l7 4 7-4M17 18v7"/></g></svg>工艺/工序</div>
          <div class="mtab wf d-flex align-items-center"><svg viewBox="0 0 34 34"><g fill="none" stroke="#e0368c" stroke-width="2.200"><path d="M1 18c3-3 7-5 11-3l8 2c3 1 2 5-2 4l-6-1"/><path d="M8 33l10-4 10-6c3-2 5-5 4-8-3 1-5 4-9 5"/><circle cx="21" cy="8" r="4"/><path d="M21 1v3M21 12v3M14 8h3M25 8h3M16 3l2 2M26 3l-2 2"/></g></svg>托外工艺</div>
        </div>

        <div class="g2wrap">
          <table class="table dg t2">
            <colgroup><col class="d-a"><col class="d-b"><col class="d-c"><col class="c-d"><col class="d-d"><col class="d-e"><col class="d-f"><col class="d-g"></colgroup>
            <thead><tr>
              <th class="ind"></th>
              <th><div class="thi"><svg><use href="#ed"/></svg>研发部完成</div></th>
              <th><div class="thi"><svg><use href="#ed"/></svg>模具类型</div></th>
              <th><div class="thi"><svg><use href="#ed"/></svg>模具名称</div></th>
              <th><div class="thi"><svg><use href="#ed"/></svg>材质</div></th>
              <th><div class="thi"><svg><use href="#ed"/></svg>费用</div></th>
              <th><div class="thi"><svg><use href="#ed"/></svg>附件</div></th>
              <th><div class="thi"><svg><use href="#ed"/></svg>备注</div></th>
            </tr></thead>
            <tbody>
              <tr class="rgrn"><td class="ind indw"><span class="ar"></span></td><td class="cw text-center"><span class="ck"><svg width="18" height="20" viewBox="0 0 18 20"><path d="M3 11l4 6 8-16" fill="none" stroke="#333" stroke-width="2"/></svg></span></td><td class="dd">模具</td><td>模具1</td><td class="dd">6063-T4</td><td class="text-end">100</td><td><a class="ulink" href="#">没有附件</a></td><td></td></tr>
            </tbody>
          </table>
        </div>

        <div class="rnav pad2 d-flex">
          <div class="mv pale"><svg><use href="#first"/></svg></div><div class="mv pale"><svg><use href="#prev"/></svg></div>
          <div class="rec">Record 1 of 1</div>
          <div class="mv pale"><svg><use href="#next"/></svg></div><div class="mv pale lastmv"><svg><use href="#last"/></svg></div>
          <button type="button" class="btn acbtn"><svg><use href="#plus"/></svg>添加</button>
          <button type="button" class="btn acbtn"><svg><use href="#ins"/></svg>插入</button>
          <button type="button" class="btn acbtn"><svg><use href="#del"/></svg>删除</button>
          <div class="trk">◂</div>
        </div>
      </div>
    </div>
  </div>
</div>
<span class="rgrip"></span>
<svg class="rarrow" viewBox="0 0 1966 200"><path d="M677 80l22 7-6 5 100 71-107-66-4 7z" fill="#ff1a1a"/></svg>
<div class="note">点击保存</div>
</body>
</html>
